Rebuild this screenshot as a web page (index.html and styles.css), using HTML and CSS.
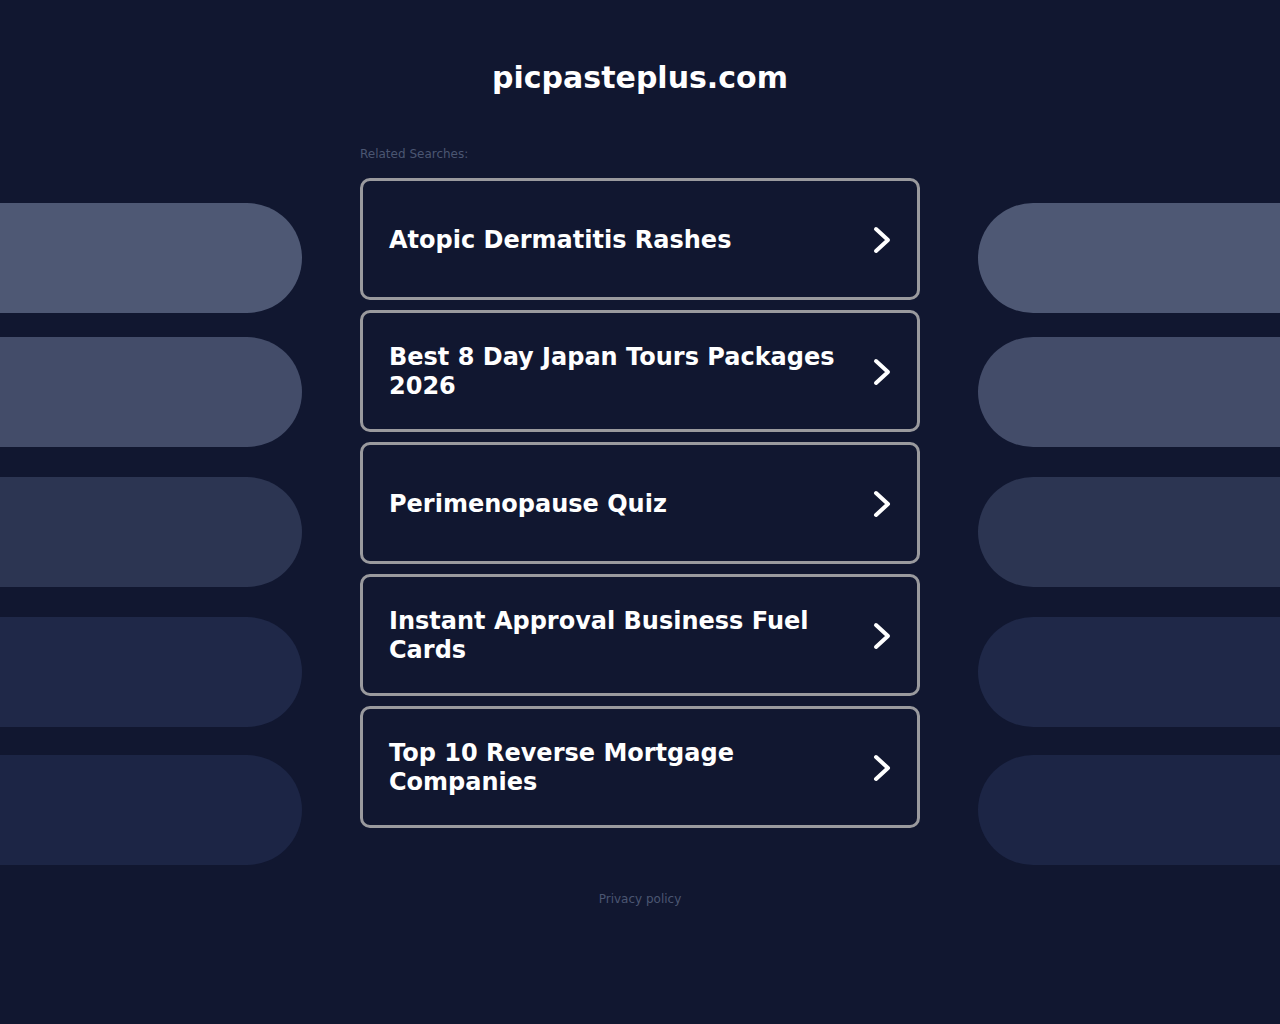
FILE: index.html
```html
<!DOCTYPE html>
<html lang="en">
<head>
<meta charset="utf-8">
<title>picpasteplus.com</title>
<link rel="stylesheet" href="styles.css">
</head>
<body>
<div class="page">
  <header class="header">
    <h1 class="domain">picpasteplus.com</h1>
  </header>
  <div class="layout">
    <div class="pills pills-left">
      <div class="pill p1"></div>
      <div class="pill p2"></div>
      <div class="pill p3"></div>
      <div class="pill p4"></div>
      <div class="pill p5"></div>
    </div>
    <main class="center">
      <div class="label">Related Searches:</div>
      <ul class="list">
        <li><a class="card" href="#"><span class="card-text">Atopic Dermatitis Rashes</span><svg class="chev" viewBox="0 0 18 28" width="18" height="28"><path d="M3 3 L15 14 L3 25" fill="none" stroke="#fff" stroke-width="4" stroke-linecap="round" stroke-linejoin="round"/></svg></a></li>
        <li><a class="card" href="#"><span class="card-text">Best 8 Day Japan Tours Packages 2026</span><svg class="chev" viewBox="0 0 18 28" width="18" height="28"><path d="M3 3 L15 14 L3 25" fill="none" stroke="#fff" stroke-width="4" stroke-linecap="round" stroke-linejoin="round"/></svg></a></li>
        <li><a class="card" href="#"><span class="card-text">Perimenopause Quiz</span><svg class="chev" viewBox="0 0 18 28" width="18" height="28"><path d="M3 3 L15 14 L3 25" fill="none" stroke="#fff" stroke-width="4" stroke-linecap="round" stroke-linejoin="round"/></svg></a></li>
        <li><a class="card" href="#"><span class="card-text">Instant Approval Business Fuel Cards</span><svg class="chev" viewBox="0 0 18 28" width="18" height="28"><path d="M3 3 L15 14 L3 25" fill="none" stroke="#fff" stroke-width="4" stroke-linecap="round" stroke-linejoin="round"/></svg></a></li>
        <li><a class="card" href="#"><span class="card-text">Top 10 Reverse Mortgage Companies</span><svg class="chev" viewBox="0 0 18 28" width="18" height="28"><path d="M3 3 L15 14 L3 25" fill="none" stroke="#fff" stroke-width="4" stroke-linecap="round" stroke-linejoin="round"/></svg></a></li>
      </ul>
    </main>
    <div class="pills pills-right">
      <div class="pill p1"></div>
      <div class="pill p2"></div>
      <div class="pill p3"></div>
      <div class="pill p4"></div>
      <div class="pill p5"></div>
    </div>
  </div>
  <footer class="footer">
    <a class="privacy" href="#">Privacy policy</a>
  </footer>
</div>
</body>
</html>
```

FILE: styles.css
```css
html, body {
  margin: 0;
  padding: 0;
}
body {
  background: #111730;
  font-family: "DejaVu Sans", sans-serif;
  color: #fff;
  min-height: 1024px;
}
.page {
  display: flex;
  flex-direction: column;
}
.header {
  height: 155px;
  display: flex;
  justify-content: center;
  padding-top: 60px;
  box-sizing: border-box;
  margin-bottom: -12px;
}
.domain {
  margin: 0;
  font-size: 30px;
  font-weight: bold;
  line-height: 36px;
  color: #fff;
}
.layout {
  display: grid;
  grid-template-columns: 302px 560px 302px;
  column-gap: 58px;
}
.pills {
  display: flex;
  flex-direction: column;
  padding-top: 60px;
}
.pill {
  height: 110px;
}
.pills-left .pill {
  border-radius: 0 55px 55px 0;
}
.pills-right .pill {
  border-radius: 55px 0 0 55px;
}
.p1 { background: #4e5874; }
.p2 { background: #434c69; margin-top: 24px; }
.p3 { background: #2c3552; margin-top: 30px; }
.p4 { background: #1f2848; margin-top: 30px; }
.p5 { background: #1c2545; margin-top: 28px; }
.center {
  display: flex;
  flex-direction: column;
}
.label {
  font-size: 12px;
  line-height: 16px;
  color: #4b5672;
  margin-top: 3px;
  margin-bottom: 16px;
}
.list {
  list-style: none;
  margin: 0;
  padding: 0;
  display: flex;
  flex-direction: column;
  gap: 10px;
}
.card {
  display: flex;
  align-items: center;
  justify-content: space-between;
  gap: 20px;
  height: 122px;
  box-sizing: border-box;
  border: 3px solid #9a9a9e;
  border-radius: 10px;
  padding: 2px 26px 0;
  text-decoration: none;
  color: #fff;
  background: #111730;
}
.card-text {
  font-size: 24px;
  font-weight: bold;
  line-height: 29px;
}
.chev {
  flex: none;
}
.footer {
  display: flex;
  justify-content: center;
  padding-top: 26px;
}
.privacy {
  font-size: 12px;
  line-height: 16px;
  color: #4b5672;
  text-decoration: none;
}
```
